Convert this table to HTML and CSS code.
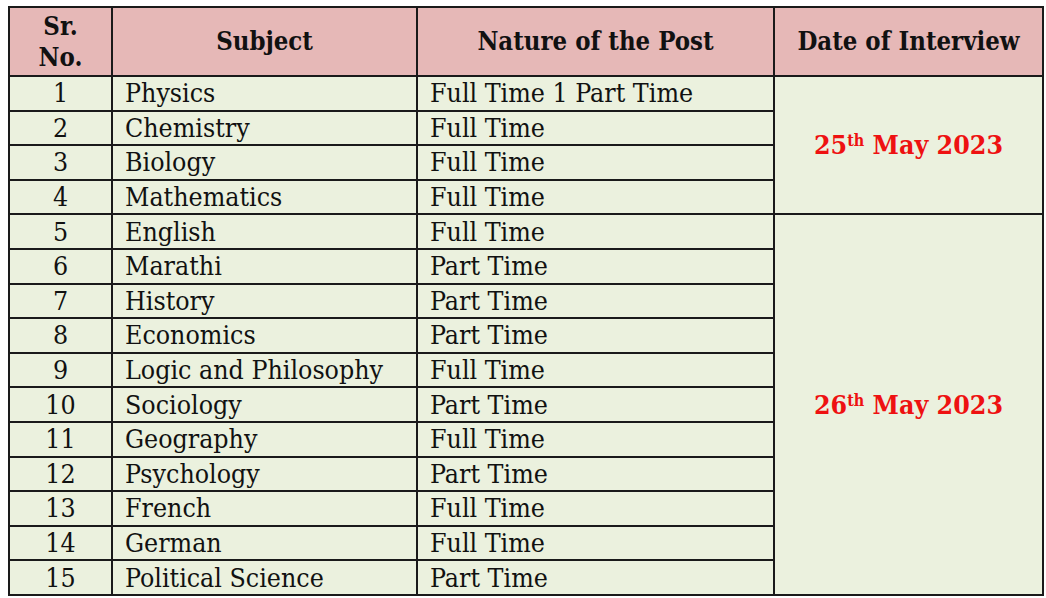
FILE: index.html
```html
<!DOCTYPE html>
<html>
<head>
<meta charset="utf-8">
<link rel="stylesheet" href="styles.css">
</head>
<body>
<table class="posts">
  <colgroup>
    <col class="c-sr">
    <col class="c-sub">
    <col class="c-nat">
    <col class="c-date">
  </colgroup>
  <thead>
    <tr class="head">
      <th>Sr.<br>No.</th>
      <th>Subject</th>
      <th>Nature of the Post</th>
      <th>Date of Interview</th>
    </tr>
  </thead>
  <tbody>
    <tr><td class="num">1</td><td class="txt">Physics</td><td class="txt">Full Time 1 Part Time</td><td class="date" rowspan="4">25<sup>th</sup> May 2023</td></tr>
    <tr><td class="num">2</td><td class="txt">Chemistry</td><td class="txt">Full Time</td></tr>
    <tr><td class="num">3</td><td class="txt">Biology</td><td class="txt">Full Time</td></tr>
    <tr><td class="num">4</td><td class="txt">Mathematics</td><td class="txt">Full Time</td></tr>
    <tr><td class="num">5</td><td class="txt">English</td><td class="txt">Full Time</td><td class="date" rowspan="11">26<sup>th</sup> May 2023</td></tr>
    <tr><td class="num">6</td><td class="txt">Marathi</td><td class="txt">Part Time</td></tr>
    <tr><td class="num">7</td><td class="txt">History</td><td class="txt">Part Time</td></tr>
    <tr><td class="num">8</td><td class="txt">Economics</td><td class="txt">Part Time</td></tr>
    <tr><td class="num">9</td><td class="txt">Logic and Philosophy</td><td class="txt">Full Time</td></tr>
    <tr><td class="num">10</td><td class="txt">Sociology</td><td class="txt">Part Time</td></tr>
    <tr><td class="num">11</td><td class="txt">Geography</td><td class="txt">Full Time</td></tr>
    <tr><td class="num">12</td><td class="txt">Psychology</td><td class="txt">Part Time</td></tr>
    <tr><td class="num">13</td><td class="txt">French</td><td class="txt">Full Time</td></tr>
    <tr><td class="num">14</td><td class="txt">German</td><td class="txt">Full Time</td></tr>
    <tr><td class="num">15</td><td class="txt">Political Science</td><td class="txt">Part Time</td></tr>
  </tbody>
</table>
</body>
</html>
```

FILE: styles.css
```css
html, body {
  margin: 0;
  padding: 0;
  background: #ffffff;
}
body {
  padding: 6px 0 0 8px;
  font-family: "DejaVu Serif Condensed", "DejaVu Serif", "Liberation Serif", serif;
  color: #111;
}
.posts {
  border-collapse: collapse;
  table-layout: fixed;
  width: 1034px;
}
.c-sr { width: 103px; }
.c-sub { width: 305px; }
.c-nat { width: 357px; }
.c-date { width: 269px; }
.posts th, .posts td {
  border: 2px solid #1a1a1a;
  padding: 0;
}
.head th {
  background: #e6b8b7;
  height: 67px;
  font-weight: bold;
  font-size: 25.5px;
  line-height: 31px;
  text-align: center;
  vertical-align: middle;
}
.posts td {
  background: #ebf1de;
  height: 32.6px;
  font-size: 26.5px;
  line-height: 30px;
  vertical-align: middle;
  overflow: hidden;
}
.num { text-align: center; }
.txt { padding-left: 12px !important; white-space: nowrap; }
.date {
  text-align: center;
  color: #ee1111;
  font-weight: bold;
  font-size: 28px;
}
.date sup {
  font-size: 16px;
  vertical-align: 8px;
  line-height: 0;
}
```
